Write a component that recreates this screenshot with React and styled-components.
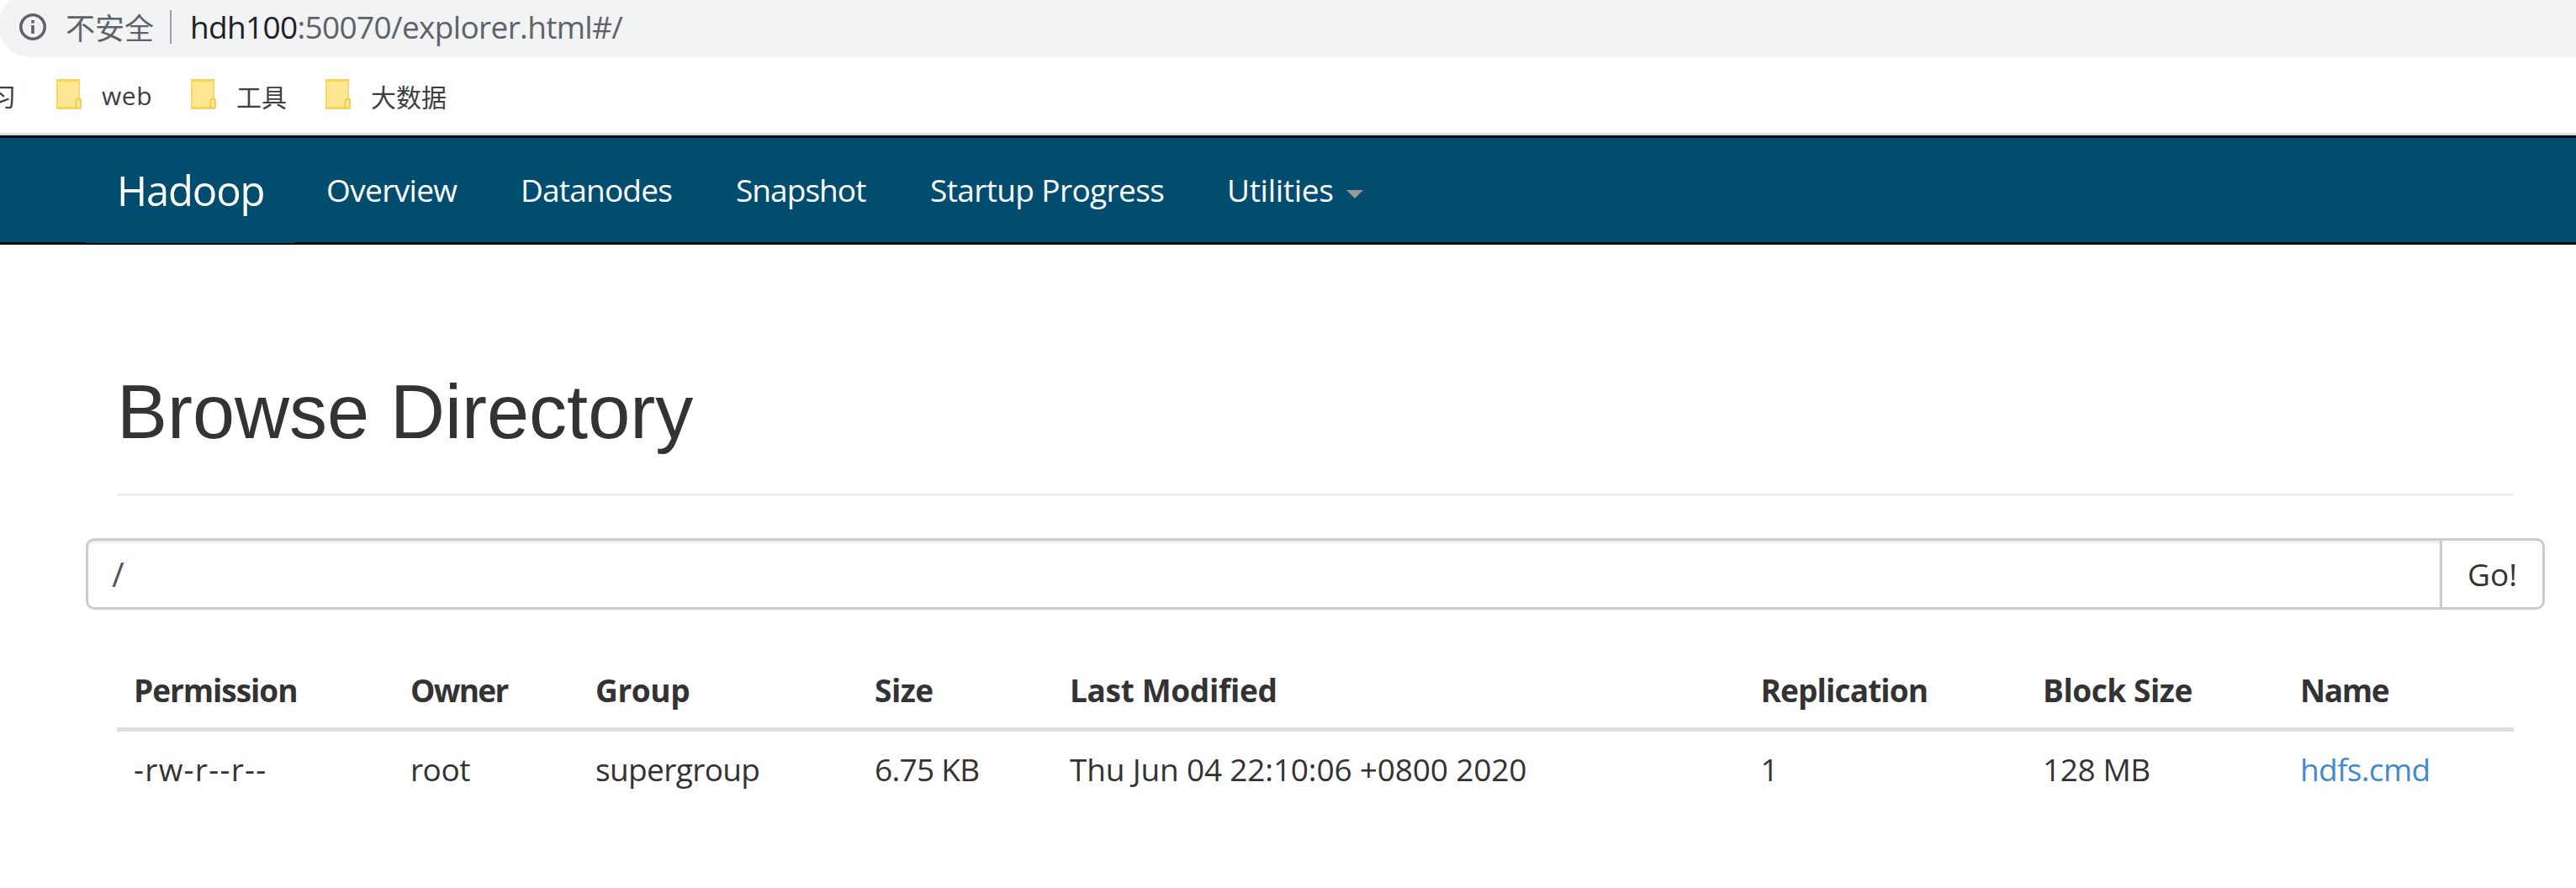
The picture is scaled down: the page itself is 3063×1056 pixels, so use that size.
import React from 'react';
import styled, { createGlobalStyle } from 'styled-components';

const GlobalStyle = createGlobalStyle`
  * { box-sizing: border-box; }
  body {
    margin: 0;
    background: #fff;
    color: #333;
    font-family: "Open Sans", "Noto Sans CJK SC", sans-serif;
    font-size: 37px;
    overflow: hidden;
  }
`;

const Page = styled.div`
  width: 3063px;
  height: 1056px;
  overflow: hidden;
  background: #fff;
`;

const Label = styled.span`
  white-space: nowrap;
  letter-spacing: ${(p) => p.$ls || 0}px;
`;

const AddressBar = styled.div`
  display: flex;
  align-items: center;
  height: 76px;
  margin: -8px 0 0 -2px;
  padding: 4px 0 0 25px;
  border-radius: 38px 0 0 38px;
  background: #f1f3f4;
  color: #5f6368;
`;

const Insecure = styled.span`
  width: 105px;
  margin-left: 23px;
  font-family: "Noto Sans CJK SC", sans-serif;
  font-size: 35px;
  line-height: 50px;
  white-space: nowrap;
`;

const Separator = styled.span`
  width: 2px;
  height: 40px;
  margin: 0 22px 0 19px;
  background: #9aa0a6;
`;

const Url = styled.span`
  letter-spacing: -0.66px;
  line-height: 50px;
  white-space: nowrap;
`;

const Host = styled.span`
  color: #202124;
`;

const Bookmarks = styled.div`
  display: flex;
  align-items: center;
  height: 93px;
  padding-bottom: 3px;
  border-bottom: 3px solid #dadce0;
  color: #3c4043;
  font-size: 30px;
`;

const ClippedBookmark = styled.span`
  display: flex;
  justify-content: flex-end;
  width: 19px;
  overflow: hidden;
  margin-right: 48px;
  padding-top: 3px;
`;

const Bookmark = styled.span`
  display: flex;
  align-items: center;
  width: 160px;
  gap: 24px;
  white-space: nowrap;
  span { padding-top: 4px; }
`;

const Navbar = styled.nav`
  display: flex;
  height: 130px;
  padding-left: 102px;
  border-top: 3px solid #080808;
  border-bottom: 3px solid #080808;
  background: #014d6f;
  color: #fff;
`;

const Brand = styled.a`
  display: flex;
  align-items: center;
  width: 249px;
  height: 125px;
  padding: 0 0 2px 37px;
  background: #014d6f;
  font-size: 49px;
`;

const NavItem = styled.a`
  display: flex;
  align-items: center;
  width: ${(p) => p.$width}px;
  padding: 0 0 1px 37px;
`;

const Caret = styled.span`
  margin: 11px 0 0 15px;
  border-top: 10px solid #999;
  border-left: 10px solid transparent;
  border-right: 10px solid transparent;
`;

const Content = styled.main`
  padding: 149px 74px 0 139px;
`;

const Title = styled.h1`
  margin: 0;
  padding-bottom: 47px;
  border-bottom: 3px solid #eee;
  font: 400 90px/100px "Liberation Sans", Arial, sans-serif;
`;

const PathForm = styled.div`
  display: flex;
  height: 85px;
  margin: 50px -37px 49px -37px;
`;

const PathField = styled.div`
  display: flex;
  align-items: center;
  flex: 1;
  padding-left: 28px;
  border: 3px solid #ccc;
  border-right: 0;
  border-radius: 10px 0 0 10px;
  box-shadow: inset 0 3px 3px rgba(0, 0, 0, 0.075);
  color: #555;
  font-size: 40px;
`;

const GoButton = styled.div`
  display: flex;
  align-items: center;
  justify-content: center;
  width: 125px;
  border: 3px solid #ccc;
  border-radius: 0 10px 10px 0;
`;

const Row = styled.div`
  display: grid;
  grid-template-columns: 329px 220px 332px 232px 821.5px 335.5px 306px 274px;
  align-items: center;
  height: 89px;
`;

const HeaderRow = styled(Row)`
  height: 96px;
  padding-top: 1px;
  border-bottom: 5px solid #ddd;
  font-weight: 700;
`;

const Cell = styled.div`
  padding-left: 20px;
  white-space: nowrap;
  letter-spacing: ${(p) => p.$ls}px;
`;

const FileLink = styled.a`
  color: #428bca;
`;

const InfoIcon = () => (
  <svg width="32" height="32" viewBox="0 0 32 32">
    <circle cx="16" cy="16" r="14.2" fill="none" stroke="#5f6368" strokeWidth="3.6" />
    <rect x="14.2" y="8" width="3.6" height="3.6" fill="#5f6368" />
    <rect x="14.2" y="14" width="3.6" height="10" fill="#5f6368" />
  </svg>
);

const FolderIcon = () => (
  <svg width="30" height="36" viewBox="0 0 30 36">
    <rect x="0.8" y="0.8" width="26.2" height="34.4" fill="#ffe693" stroke="#f8d351" strokeWidth="1.6" />
    <path d="M2 2.3h24M2 33.7h22" stroke="#f4cb45" strokeWidth="1" />
    <rect x="23.4" y="23.6" width="5.8" height="11.6" rx="2.4" fill="#ffe693" stroke="#f3c940" strokeWidth="1.6" />
  </svg>
);

const navItems = [
  ['Overview', 231, -0.63],
  ['Datanodes', 256, -0.79],
  ['Snapshot', 231, -0.94],
  ['Startup Progress', 353, -0.62],
];

const columns = [
  ['Permission', -1.03],
  ['Owner', -1.7],
  ['Group', -0.38],
  ['Size', -0.48],
  ['Last Modified', -0.32],
  ['Replication', -0.86],
  ['Block Size', -0.43],
  ['Name', -1.35],
];

const file = [
  ['-rw-r--r--', 1.3],
  ['root', -0.5],
  ['supergroup', -0.63],
  ['6.75 KB', -0.7],
  ['Thu Jun 04 22:10:06 +0800 2020', -0.17],
  ['1', 0],
  ['128 MB', -0.42],
];

export default function App() {
  return (
    <Page>
      <GlobalStyle />
      <AddressBar>
        <InfoIcon />
        <Insecure>不安全</Insecure>
        <Separator />
        <Url><Host>hdh100</Host>:50070/explorer.html#/</Url>
      </AddressBar>
      <Bookmarks>
        <ClippedBookmark>习</ClippedBookmark>
        {['web', '工具', '大数据'].map((name) => (
          <Bookmark key={name}><FolderIcon /><Label $ls={name === 'web' ? 0.6 : 0}>{name}</Label></Bookmark>
        ))}
      </Bookmarks>
      <Navbar>
        <Brand><Label $ls={-1.17}>Hadoop</Label></Brand>
        {navItems.map(([name, width, ls]) => (
          <NavItem key={name} $width={width}><Label $ls={ls}>{name}</Label></NavItem>
        ))}
        <NavItem $width={240}><Label $ls={-0.29}>Utilities</Label><Caret /></NavItem>
      </Navbar>
      <Content>
        <Title>Browse Directory</Title>
        <PathForm>
          <PathField>/</PathField>
          <GoButton>Go!</GoButton>
        </PathForm>
        <HeaderRow>
          {columns.map(([name, ls]) => <Cell key={name} $ls={ls}>{name}</Cell>)}
        </HeaderRow>
        <Row>
          {file.map(([value, ls]) => <Cell key={value} $ls={ls}>{value}</Cell>)}
          <Cell $ls={-0.66}><FileLink>hdfs.cmd</FileLink></Cell>
        </Row>
      </Content>
    </Page>
  );
}
